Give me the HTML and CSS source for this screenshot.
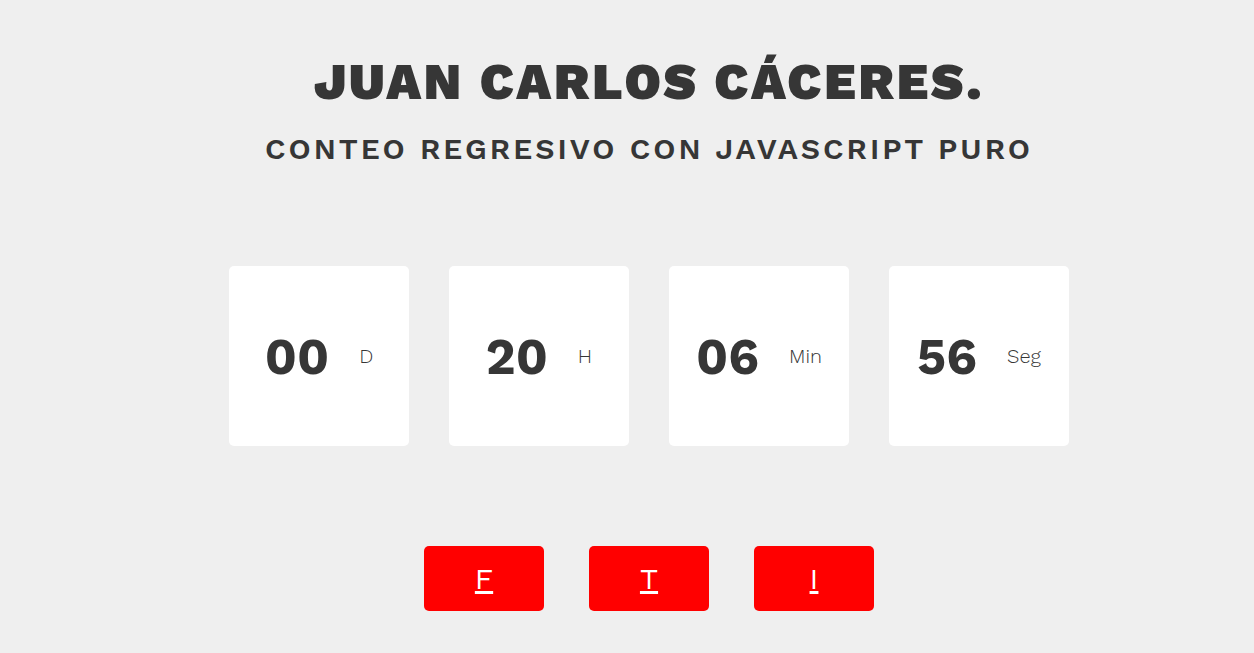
FILE: index.html
```html
<!DOCTYPE html>
<html lang="es">
<head>
<meta charset="utf-8">
<title>Conteo regresivo</title>
<link rel="stylesheet" href="styles.css">
</head>
<body>
<main class="page">
  <header class="heading">
    <h1 class="title">JUAN CARLOS CÁCERES.</h1>
    <h2 class="subtitle">CONTEO REGRESIVO CON JAVASCRIPT PURO</h2>
  </header>
  <section class="countdown" aria-label="Conteo regresivo">
    <div class="card"><span class="number">00</span><span class="unit">D</span></div>
    <div class="card"><span class="number">20</span><span class="unit">H</span></div>
    <div class="card"><span class="number">06</span><span class="unit">Min</span></div>
    <div class="card"><span class="number">56</span><span class="unit">Seg</span></div>
  </section>
  <nav class="links" aria-label="Redes sociales">
    <a class="link" href="#f">F</a>
    <a class="link" href="#t">T</a>
    <a class="link" href="#i">I</a>
  </nav>
</main>
</body>
</html>
```
FILE: styles.css
```css
* {
  box-sizing: border-box;
}

body {
  margin: 0;
  background: #efefef;
  color: #363636;
  font-family: "Work Sans", Inter, sans-serif;
}

.page {
  display: flex;
  flex-direction: column;
  align-items: center;
  padding: 52px 0 42px 44px;
}

.heading {
  text-align: center;
}

.title {
  margin: 0;
  font-size: 50px;
  line-height: 60px;
  font-weight: 900;
  letter-spacing: 3px;
}

.subtitle {
  margin: 20px 0 0;
  font-size: 30px;
  line-height: 34px;
  font-weight: 600;
  letter-spacing: 3px;
}

.countdown {
  display: flex;
  flex-wrap: wrap;
  justify-content: center;
  gap: 40px;
  margin-top: 100px;
}

.card {
  display: flex;
  align-items: center;
  justify-content: center;
  gap: 30px;
  width: 180px;
  height: 180px;
  border-radius: 5px;
  background: #fff;
}

.number {
  font-size: 50px;
  font-weight: 700;
}

.unit {
  font-size: 20px;
  font-weight: 300;
}

.links {
  display: flex;
  flex-wrap: wrap;
  justify-content: center;
  gap: 45px;
  margin-top: 100px;
}

.link {
  display: flex;
  align-items: center;
  justify-content: center;
  width: 120px;
  height: 65px;
  border-radius: 5px;
  background: #f00;
  color: #fff;
  font-size: 30px;
  text-decoration-thickness: 3px;
}
```
